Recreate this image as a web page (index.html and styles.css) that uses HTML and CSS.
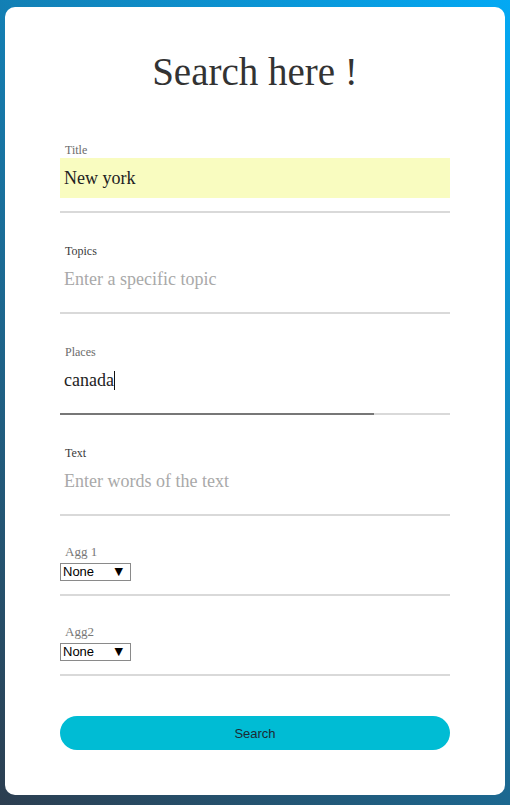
FILE: index.html
```html
<!DOCTYPE html>
<html lang="en">
<head>
<meta charset="utf-8">
<title>Search here !</title>
<link rel="stylesheet" href="styles.css">
</head>
<body>
  <main class="card">
    <h1 class="title">Search here !</h1>
    <form class="form">
      <div class="field">
        <label class="label" for="title">Title</label>
        <input class="input autofill" id="title" type="text" value="New york">
      </div>
      <div class="field">
        <label class="label dark" for="topics">Topics</label>
        <input class="input" id="topics" type="text" placeholder="Enter a specific topic">
      </div>
      <div class="field focused">
        <label class="label" for="places">Places</label>
        <div class="input-wrap">
          <input class="input" id="places" type="text" value="canada">
          <span class="caret"></span>
        </div>
      </div>
      <div class="field last-text">
        <label class="label dark" for="text">Text</label>
        <input class="input" id="text" type="text" placeholder="Enter words of the text">
      </div>
      <div class="field agg">
        <label class="label agg-label" for="agg1">Agg 1</label>
        <div class="select-wrap">
          <select class="select" id="agg1"><option>None</option></select>
        </div>
      </div>
      <div class="field agg">
        <label class="label agg-label" for="agg2">Agg2</label>
        <div class="select-wrap">
          <select class="select" id="agg2"><option>None</option></select>
        </div>
      </div>
      <button class="button" type="button">Search</button>
    </form>
  </main>
</body>
</html>
```
FILE: styles.css
```css
html, body {
  margin: 0;
  padding: 0;
}

body {
  min-height: 805px;
  box-sizing: border-box;
  padding: 7px 5px 10px;
  background: linear-gradient(45deg, #2c3e50, #03a9f4);
  font-family: "Liberation Serif", "Times New Roman", serif;
}

.card {
  background: #fff;
  border-radius: 10px;
  padding: 44px 55px 45px;
}

.title {
  margin: 0 0 50px;
  text-align: center;
  font-weight: normal;
  font-size: 39px;
  line-height: 42px;
  color: #333;
}

.form {
  display: flex;
  flex-direction: column;
}

.field {
  display: flex;
  flex-direction: column;
  padding-bottom: 13px;
  border-bottom: 2px solid #d9d9d9;
  margin-bottom: 31px;
  position: relative;
}

.field.last-text {
  margin-bottom: 29px;
}

.label {
  font-size: 12px;
  line-height: 14px;
  color: #6b6b6b;
  padding-left: 5px;
}

.label.dark {
  color: #3a3a3a;
}

.input {
  margin-top: 1px;
  height: 40px;
  box-sizing: border-box;
  border: none;
  outline: none;
  padding: 0 4px;
  font-family: "Liberation Serif", "Times New Roman", serif;
  font-size: 18px;
  color: #222;
  background: transparent;
  width: 100%;
}

.input::placeholder {
  color: #a9a9a9;
}

.input.autofill {
  background: #f9fcc0;
}

.input-wrap {
  position: relative;
  display: flex;
}

.caret {
  position: absolute;
  left: 54px;
  top: 12px;
  width: 1px;
  height: 19px;
  background: #111;
}

.field.focused::after {
  content: "";
  position: absolute;
  left: 0;
  bottom: -2px;
  width: 314px;
  height: 2px;
  background: #777;
}

.field.agg {
  margin-bottom: 29px;
}

.agg-label {
  font-size: 13px;
  color: #777;
}

.select-wrap {
  margin-top: 4px;
  position: relative;
  width: 71px;
}

.select-wrap::after {
  content: "\25BC";
  position: absolute;
  right: 8px;
  top: 2px;
  font-family: "DejaVu Sans", sans-serif;
  font-size: 11px;
  line-height: 14px;
  color: #000;
  pointer-events: none;
}

.select {
  -webkit-appearance: none;
  appearance: none;
  display: block;
  width: 71px;
  height: 18px;
  box-sizing: border-box;
  border: 1px solid #8a8a8a;
  border-radius: 0;
  background: #fff;
  padding: 0 0 0 2px;
  font-family: "Liberation Sans", Arial, sans-serif;
  font-size: 13px;
  line-height: 16px;
  color: #000;
}

.button {
  margin-top: 11px;
  height: 34px;
  border: none;
  border-radius: 17px;
  background: #00bcd4;
  font-family: "Liberation Sans", Arial, sans-serif;
  font-size: 13px;
  color: #1d2a33;
  cursor: pointer;
}
```
